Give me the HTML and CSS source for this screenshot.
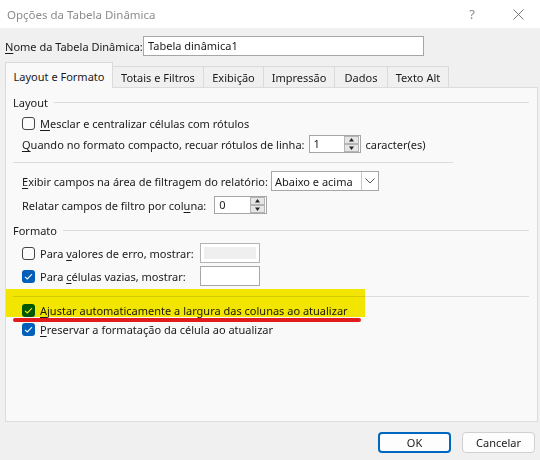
FILE: index.html
```html
<!DOCTYPE html>
<html lang="pt">
<head>
<meta charset="utf-8">
<title>Opções da Tabela Dinâmica</title>
<link rel="stylesheet" href="styles.css">
</head>
<body>
<div class="dialog">
  <div class="titlebar">
    <span class="title">Opções da Tabela Dinâmica</span>
    <span class="help">?</span>
    <span class="close"><svg width="11" height="11" viewBox="0 0 11 11"><path d="M0.5 0.5 L10.5 10.5 M10.5 0.5 L0.5 10.5" stroke="#7a7a7a" stroke-width="1" fill="none"/></svg></span>
  </div>

  <div class="name-row">
    <span class="name-label"><u>N</u>ome da Tabela Dinâmica:</span>
    <div class="textbox">Tabela dinâmica1</div>
  </div>

  <div class="tabs">
    <div class="tab active">Layout e Formato</div>
    <div class="tab">Totais e Filtros</div>
    <div class="tab">Exibição</div>
    <div class="tab">Impressão</div>
    <div class="tab">Dados</div>
    <div class="tab">Texto Alt</div>
  </div>

  <div class="panel">
    <div class="group-head"><span>Layout</span><span class="rule"></span></div>

    <div class="row r-merge">
      <span class="cb"></span>
      <span class="cb-label"><u>M</u>esclar e centralizar células com rótulos</span>
    </div>

    <div class="row r-indent">
      <span><u>Q</u>uando no formato compacto, recuar rótulos de linha:</span>
      <div class="spin spin1">
        <span class="spin-val">1</span>
        <svg class="spin-btns" width="15" height="16" viewBox="0 0 15 16"><rect x="0.5" y="0.5" width="14" height="7" fill="#e6e6e6" stroke="#b4b4b4"/><rect x="0.5" y="8.5" width="14" height="7" fill="#e6e6e6" stroke="#b4b4b4"/><path d="M7.5 2 L10 5.5 L5 5.5 Z" fill="#222"/><path d="M7.5 14 L10 10.5 L5 10.5 Z" fill="#222"/></svg>
      </div>
      <span class="after-spin">caracter(es)</span>
    </div>

    <div class="sep sep-short"></div>

    <div class="row r-filter">
      <span><u>E</u>xibir campos na área de filtragem do relatório:</span>
      <div class="combo">
        <span class="combo-val">Abaixo e acima</span>
        <span class="combo-btn"><svg width="10" height="6" viewBox="0 0 10 6"><path d="M0.5 0.5 L5 5 L9.5 0.5" stroke="#555" stroke-width="1" fill="none"/></svg></span>
      </div>
    </div>

    <div class="row r-col">
      <span>Relatar campos de filtro por col<u>u</u>na:</span>
      <div class="spin spin2">
        <span class="spin-val">0</span>
        <svg class="spin-btns" width="15" height="16" viewBox="0 0 15 16"><rect x="0.5" y="0.5" width="14" height="7" fill="#e6e6e6" stroke="#b4b4b4"/><rect x="0.5" y="8.5" width="14" height="7" fill="#e6e6e6" stroke="#b4b4b4"/><path d="M7.5 2 L10 5.5 L5 5.5 Z" fill="#222"/><path d="M7.5 14 L10 10.5 L5 10.5 Z" fill="#222"/></svg>
      </div>
    </div>

    <div class="group-head gh-format"><span>Formato</span><span class="rule"></span></div>

    <div class="row r-err">
      <span class="cb"></span>
      <span class="cb-label fixed">Para <u>v</u>alores de erro, mostrar:</span>
      <div class="field disabled"></div>
    </div>

    <div class="row r-empty">
      <span class="cb checked"><svg width="13" height="13" viewBox="0 0 13 13"><path d="M3 6.8 L5.3 9 L10 4.2" stroke="#fff" stroke-width="1.1" fill="none"/></svg></span>
      <span class="cb-label fixed">Para <u>c</u>élulas vazias, mostrar:</span>
      <div class="field"></div>
    </div>

    <div class="sep sep-long"></div>

    <div class="row r-auto">
      <span class="cb checked"><svg width="13" height="13" viewBox="0 0 13 13"><path d="M3 6.8 L5.3 9 L10 4.2" stroke="#fff" stroke-width="1.1" fill="none"/></svg></span>
      <span class="cb-label"><u>A</u>justar automaticamente a largura das colunas ao atualizar</span>
    </div>

    <div class="row r-keep">
      <span class="cb checked"><svg width="13" height="13" viewBox="0 0 13 13"><path d="M3 6.8 L5.3 9 L10 4.2" stroke="#fff" stroke-width="1.1" fill="none"/></svg></span>
      <span class="cb-label"><u>P</u>reservar a formatação da célula ao atualizar</span>
    </div>

    <div class="marker"></div>
    <div class="redline"></div>
  </div>

  <div class="buttons">
    <button class="btn primary">OK</button>
    <button class="btn">Cancelar</button>
  </div>
</div>
</body>
</html>
```

FILE: styles.css
```css
* { box-sizing: border-box; }

html, body {
  margin: 0;
  padding: 0;
}

body {
  width: 540px;
  height: 460px;
  background: #f0f0f0;
  font-family: "Segoe UI", "Noto Sans", "Liberation Sans", sans-serif;
  font-size: 11px;
  color: #1a1a1a;
  overflow: hidden;
  white-space: nowrap;
}

u { text-decoration-thickness: 1px; text-underline-offset: 2px; }

.dialog {
  width: 540px;
  height: 460px;
  display: flex;
  flex-direction: column;
}

.titlebar {
  height: 28px;
  background: #ffffff;
  display: flex;
  align-items: center;
  padding-left: 7px;
}

.title {
  flex: 1;
  color: #8c8c8c;
  font-size: 11.5px;
}

.help {
  width: 20px;
  text-align: center;
  color: #8c8c8c;
  font-size: 13px;
  margin-right: 31px;
}

.close {
  display: flex;
  width: 11px;
  height: 11px;
  margin-right: 16px;
}

.name-row {
  margin-top: 8px;
  padding-left: 5px;
  display: flex;
  align-items: center;
  height: 20px;
}

.name-label { width: 138px; }

.textbox {
  width: 281px;
  height: 20px;
  border: 1px solid #a6a6a6;
  background: #ffffff;
  padding-left: 4px;
  line-height: 18px;
}

.tabs {
  display: flex;
  align-items: flex-end;
  height: 32px;
  margin: 0 0 -1px 5px;
}

.tab {
  height: 22px;
  border: 1px solid #dadada;
  border-bottom: none;
  background: #f0f0f0;
  padding: 3px 0 0;
  line-height: 16px;
  text-align: center;
  margin-left: -1px;
}

.tab:nth-child(1) { width: 108px; margin-left: 0; }
.tab:nth-child(2) { width: 92px; }
.tab:nth-child(3) { width: 61px; }
.tab:nth-child(4) { width: 72px; }
.tab:nth-child(5) { width: 54px; }
.tab:nth-child(6) { width: 62px; }

.tab.active {
  height: 26px;
  padding-top: 6px;
  background: #f9f9f9;
  position: relative;
  z-index: 1;
}

.panel {
  position: relative;
  height: 335px;
  margin: 0 2px 0 5px;
  border: 1px solid #dcdcdc;
  background: #f9f9f9;
  padding: 7px 8px 0 7px;
}

.group-head {
  display: flex;
  align-items: center;
  gap: 6px;
  height: 15px;
}

.group-head .rule {
  flex: 1;
  height: 1px;
  background: #dcdcdc;
  margin-top: -1px;
}

.row {
  display: flex;
  align-items: center;
  margin-left: 9px;
  height: 20px;
}

.r-merge { margin-top: 3px; }
.r-indent { margin-top: 1px; }
.r-filter { margin-top: 8px; }
.r-col { margin-top: 4px; }
.gh-format { margin-top: 8px; }
.r-err { margin-top: 5px; }
.r-empty { margin-top: 3px; }
.r-auto { margin-top: 5px; height: 16px; }
.r-keep { margin-top: 3px; height: 16px; }

.sep {
  height: 1px;
  background: #dcdcdc;
}

.sep-short { width: 440px; margin-top: 8px; }
.sep-long { margin-top: 10px; }

.cb {
  width: 13px;
  height: 13px;
  border: 1px solid #444;
  border-radius: 3px;
  background: #fbfbfb;
  flex: none;
  display: flex;
}

.cb.checked {
  border: none;
  background: #005fb8;
}

.cb-label { margin-left: 5px; }
.cb-label.fixed { width: 160px; }

.spin {
  height: 18px;
  border: 1px solid #a6a6a6;
  background: #ffffff;
  display: flex;
  align-items: center;
  padding-right: 1px;
}

.spin1 { width: 52px; margin-left: 4px; }
.spin2 { width: 53px; margin-left: 8px; }

.spin-val {
  flex: 1;
  padding-left: 4px;
  line-height: 16px;
}

.after-spin { margin-left: 5px; }

.combo {
  width: 108px;
  height: 20px;
  border: 1px solid #a6a6a6;
  background: #ffffff;
  display: flex;
  align-items: center;
  margin-left: 3px;
}

.combo-val { flex: 1; padding-left: 3px; }

.combo-btn {
  width: 17px;
  height: 18px;
  border-left: 1px solid #c8c8c8;
  display: flex;
  align-items: center;
  justify-content: center;
}

.field {
  width: 60px;
  height: 20px;
  border: 1px solid #a6a6a6;
  background: #ffffff;
}

.field.disabled {
  background: #efefef;
  box-shadow: inset 0 0 0 3px #ffffff;
  border-color: #b4b4b4;
}

.marker {
  position: absolute;
  left: 0;
  top: 201px;
  width: 359px;
  height: 28px;
  background: #f8ec00;
  mix-blend-mode: multiply;
}

.redline {
  position: absolute;
  left: 7px;
  top: 230px;
  width: 348px;
  height: 4px;
  border-radius: 2px;
  background: #e21b1b;
}

.buttons {
  display: flex;
  justify-content: flex-end;
  gap: 11px;
  margin-top: 10px;
  padding-right: 5px;
}

.btn {
  width: 73px;
  height: 21px;
  border: 1px solid #d0d0d0;
  border-radius: 4px;
  background: #fdfdfd;
  font-family: inherit;
  font-size: 11px;
  color: #1a1a1a;
  padding: 0;
}

.btn.primary {
  border: 2px solid #0067c0;
}
```
